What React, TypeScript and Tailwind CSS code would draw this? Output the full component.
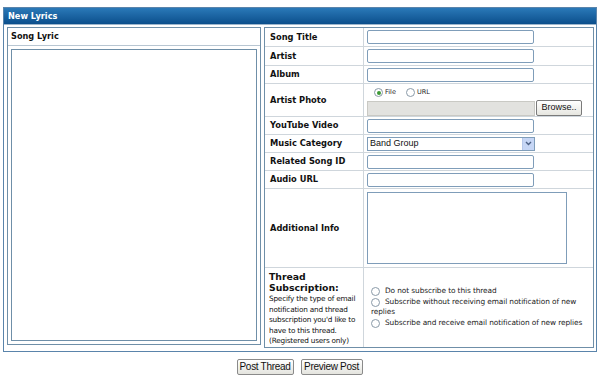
import React from 'react';

const label = "font-['DejaVu_Sans',sans-serif] text-[8.3px] font-bold text-[#111] pl-[5px] flex items-center shrink-0";
const input = "w-[167px] h-[14px] border border-[#7f9db9] rounded-[2px] bg-white";

const Radio = ({ checked = false }: { checked?: boolean }) => (
  <span className="inline-flex w-[9px] h-[9px] rounded-full border border-[#8a9aa8] bg-white items-center justify-center shrink-0">
    {checked && <span className="w-[4px] h-[4px] rounded-full bg-[#3d9a36]" />}
  </span>
);

const App: React.FC = () => {
  return (
    <div className="w-[600px] h-[381px] bg-white pt-[7px] font-['DejaVu_Sans',sans-serif]">
      <div className="ml-[3px] w-[594px] border border-[#5a84ab]">
        <div className="h-[16px] bg-gradient-to-b from-[#2a79b8] to-[#0b4f8c] text-white text-[8.2px] font-bold flex items-center pl-[4px]">
          New Lyrics
        </div>
        <div className="flex gap-[3px] pl-[3px] pr-[2px] pt-[2px] pb-[3px] border-t border-[#9db6cc]">
          {/* left */}
          <div className="w-[254px] h-[318px] border border-[#6f8fa8] flex flex-col shrink-0">
            <div className="h-[18px] border-b border-[#b8c6d2] text-[8.2px] font-bold pl-[3px] flex items-center text-[#111]">Song Lyric</div>
            <div className="flex-1 p-[3px]">
              <div className="w-full h-full border border-[#6f8fa8]" />
            </div>
          </div>
          {/* right */}
          <div className="w-[330px] border border-[#6f8fa8] flex flex-col shrink-0">
            <div className="flex h-[19px] border-b border-[#cfd6dc]">
              <div className={`w-[99px] border-r border-[#cfd6dc] ${label}`}>Song Title</div>
              <div className="flex items-center pl-[3px]"><div className={input} /></div>
            </div>
            <div className="flex h-[19px] border-b border-[#cfd6dc]">
              <div className={`w-[99px] border-r border-[#cfd6dc] ${label}`}>Artist</div>
              <div className="flex items-center pl-[3px]"><div className={input} /></div>
            </div>
            <div className="flex h-[18px] border-b border-[#cfd6dc]">
              <div className={`w-[99px] border-r border-[#cfd6dc] ${label}`}>Album</div>
              <div className="flex items-center pl-[3px]"><div className={input} /></div>
            </div>
            <div className="flex h-[33px] border-b border-[#cfd6dc]">
              <div className={`w-[99px] border-r border-[#cfd6dc] ${label}`}>Artist Photo</div>
              <div className="flex flex-col pl-[3px] pt-[3px]">
                <div className="flex items-center gap-[2px] pl-[7px] h-[11px] text-[6.5px] text-[#222]">
                  <Radio checked /> <span className="mr-[8px]">File</span>
                  <Radio /> <span>URL</span>
                </div>
                <div className="flex items-center mt-[2px]">
                  <div className="w-[168px] h-[15px] bg-[#e2e2df] border border-[#c9c9c4]" />
                  <div className="ml-[1px] w-[46px] h-[16px] border border-[#7a7a7a] rounded-[2px] bg-gradient-to-b from-white to-[#e6e6e0] font-['Liberation_Sans',sans-serif] text-[9px] text-[#111] flex items-center justify-center">Browse..</div>
                </div>
              </div>
            </div>
            <div className="flex h-[18px] border-b border-[#cfd6dc]">
              <div className={`w-[99px] border-r border-[#cfd6dc] ${label}`}>YouTube Video</div>
              <div className="flex items-center pl-[3px]"><div className={input} /></div>
            </div>
            <div className="flex h-[18px] border-b border-[#cfd6dc]">
              <div className={`w-[99px] border-r border-[#cfd6dc] ${label}`}>Music Category</div>
              <div className="flex items-center pl-[3px]">
                <div className="w-[168px] h-[14px] border border-[#7f9db9] bg-white flex items-center justify-between">
                  <span className="font-['Liberation_Sans',sans-serif] text-[9px] text-[#111] pl-[2px]">Band Group</span>
                  <span className="w-[12px] h-[12px] bg-[#c6d6f5] border-l border-[#b6c8ea] flex items-center justify-center">
                    <svg width="7" height="5" viewBox="0 0 7 5"><path d="M1 1l2.5 2.5L6 1" stroke="#4d6185" strokeWidth="1.4" fill="none" /></svg>
                  </span>
                </div>
              </div>
            </div>
            <div className="flex h-[18px] border-b border-[#cfd6dc]">
              <div className={`w-[99px] border-r border-[#cfd6dc] ${label}`}>Related Song ID</div>
              <div className="flex items-center pl-[3px]"><div className={input} /></div>
            </div>
            <div className="flex h-[18px] border-b border-[#cfd6dc]">
              <div className={`w-[99px] border-r border-[#cfd6dc] ${label}`}>Audio URL</div>
              <div className="flex items-center pl-[3px]"><div className={input} /></div>
            </div>
            <div className="flex h-[79px] border-b border-[#cfd6dc]">
              <div className={`w-[99px] border-r border-[#cfd6dc] ${label}`}>Additional Info</div>
              <div className="flex items-center pl-[3px]"><div className="w-[200px] h-[72px] border border-[#7f9db9] bg-white" /></div>
            </div>
            <div className="flex flex-1">
              <div className="w-[99px] shrink-0 border-r border-[#cfd6dc] pl-[4px] pt-[3px] text-[#111]">
                <div className="text-[9.3px] font-bold leading-[11px]">Thread Subscription:</div>
                <div className="text-[7.3px] leading-[10.5px] mt-[1px] tracking-[-0.2px]">Specify the type of email notification and thread subscription you'd like to have to this thread. (Registered users only)</div>
              </div>
              <div className="flex-1 flex flex-col justify-center min-w-0 pl-[6px] pr-[12px] text-[7.4px] leading-[10px] text-[#222] tracking-[-0.1px]">
                <div className="flex items-center gap-[5px] pl-[1px]"><Radio /> Do not subscribe to this thread</div>
                <div className="pl-[1px] mt-[1px]"><span className="inline-flex align-middle mr-[5px]"><Radio /></span>Subscribe without receiving email notification of new replies</div>
                <div className="flex items-center gap-[5px] pl-[1px] mt-[1px] whitespace-nowrap"><Radio /> Subscribe and receive email notification of new replies</div>
              </div>
            </div>
          </div>
        </div>
      </div>
      <div className="flex justify-center gap-[7px] mt-[7px] pr-[1px] font-['Liberation_Sans',sans-serif] text-[10px] text-[#111]">
        <div className="w-[57px] h-[16px] border border-[#8a8a8a] rounded-[2px] bg-gradient-to-b from-white to-[#e4e4de] flex items-center justify-center tracking-[-0.3px]">Post Thread</div>
        <div className="w-[62px] h-[16px] border border-[#8a8a8a] rounded-[2px] bg-gradient-to-b from-white to-[#e4e4de] flex items-center justify-center tracking-[-0.3px]">Preview Post</div>
      </div>
    </div>
  );
};

export default App;
